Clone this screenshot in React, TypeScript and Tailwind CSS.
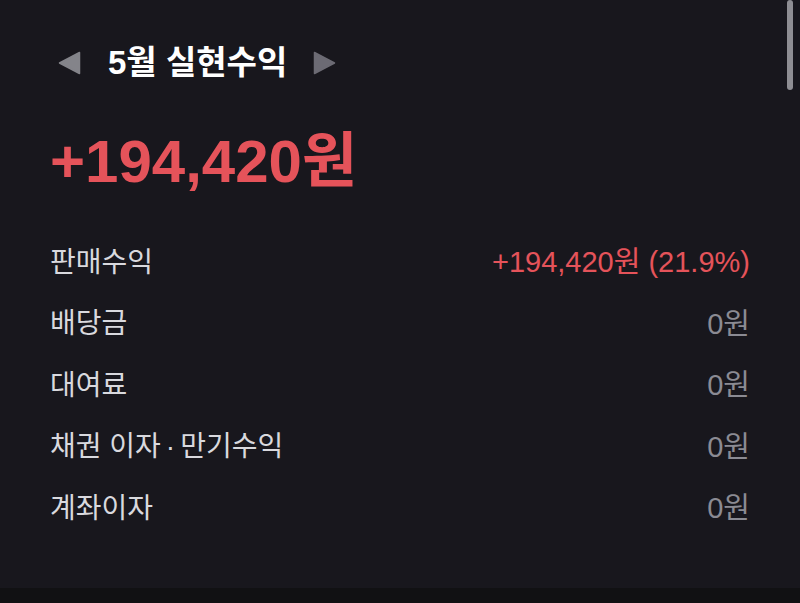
import React from "react";

const rows: { label: React.ReactNode; key: string; value: string; red?: boolean }[] = [
  { key: "sell", label: "판매수익", value: "+194,420원 (21.9%)", red: true },
  { key: "div", label: "배당금", value: "0원" },
  { key: "lend", label: "대여료", value: "0원" },
  {
    key: "bond",
    label: (
      <>
        채권 이자<span className="px-[5px]">·</span>만기수익
      </>
    ),
    value: "0원",
  },
  { key: "acct", label: "계좌이자", value: "0원" },
];

export default function App() {
  return (
    <div
      className="relative w-[800px] h-[603px] overflow-hidden bg-[#18171d] flex flex-col"
      style={{ fontFamily: '"Liberation Sans", "Noto Sans CJK KR", sans-serif' }}
    >
      {/* scrollbar */}
      <div className="absolute right-[7px] top-0 w-[6px] h-[90px] rounded-full bg-[#8e8e93]" />

      <div className="flex-1 px-[50px]">
        {/* month header */}
        <div className="flex items-center h-[62px] mt-[32px] ml-[8px]">
          <svg width="23" height="24" viewBox="0 0 23 24" className="shrink-0">
            <path d="M21.5 1.5 L1.5 12 L21.5 22.5 Z" fill="#84848a" stroke="#84848a" strokeWidth="1.5" strokeLinejoin="round" />
          </svg>
          <span className="ml-[27px] text-[33px] font-semibold text-white">
            5월 실현수익
          </span>
          <svg width="23" height="24" viewBox="0 0 23 24" className="shrink-0 ml-[26px]">
            <path d="M1.5 1.5 L21.5 12 L1.5 22.5 Z" fill="#6c6b74" stroke="#6c6b74" strokeWidth="1.5" strokeLinejoin="round" />
          </svg>
        </div>

        {/* total */}
        <div className="mt-[35px] text-[60px] leading-[66px] font-bold text-[#e5535a]">
          +194,420원
        </div>

        {/* breakdown */}
        <div className="mt-[37px] flex flex-col">
          {rows.map((r) => (
            <div key={r.key} className="flex items-center justify-between h-[61.5px]">
              <span className="text-[28px] text-[#d9d9de]">{r.label}</span>
              <span
                className={`text-[29px] ${r.red ? "text-[#e5535a]" : "text-[#8b8b93]"}`}
              >
                {r.value}
              </span>
            </div>
          ))}
        </div>
      </div>

      <div className="h-[15px] bg-[#111113]" />
    </div>
  );
}
